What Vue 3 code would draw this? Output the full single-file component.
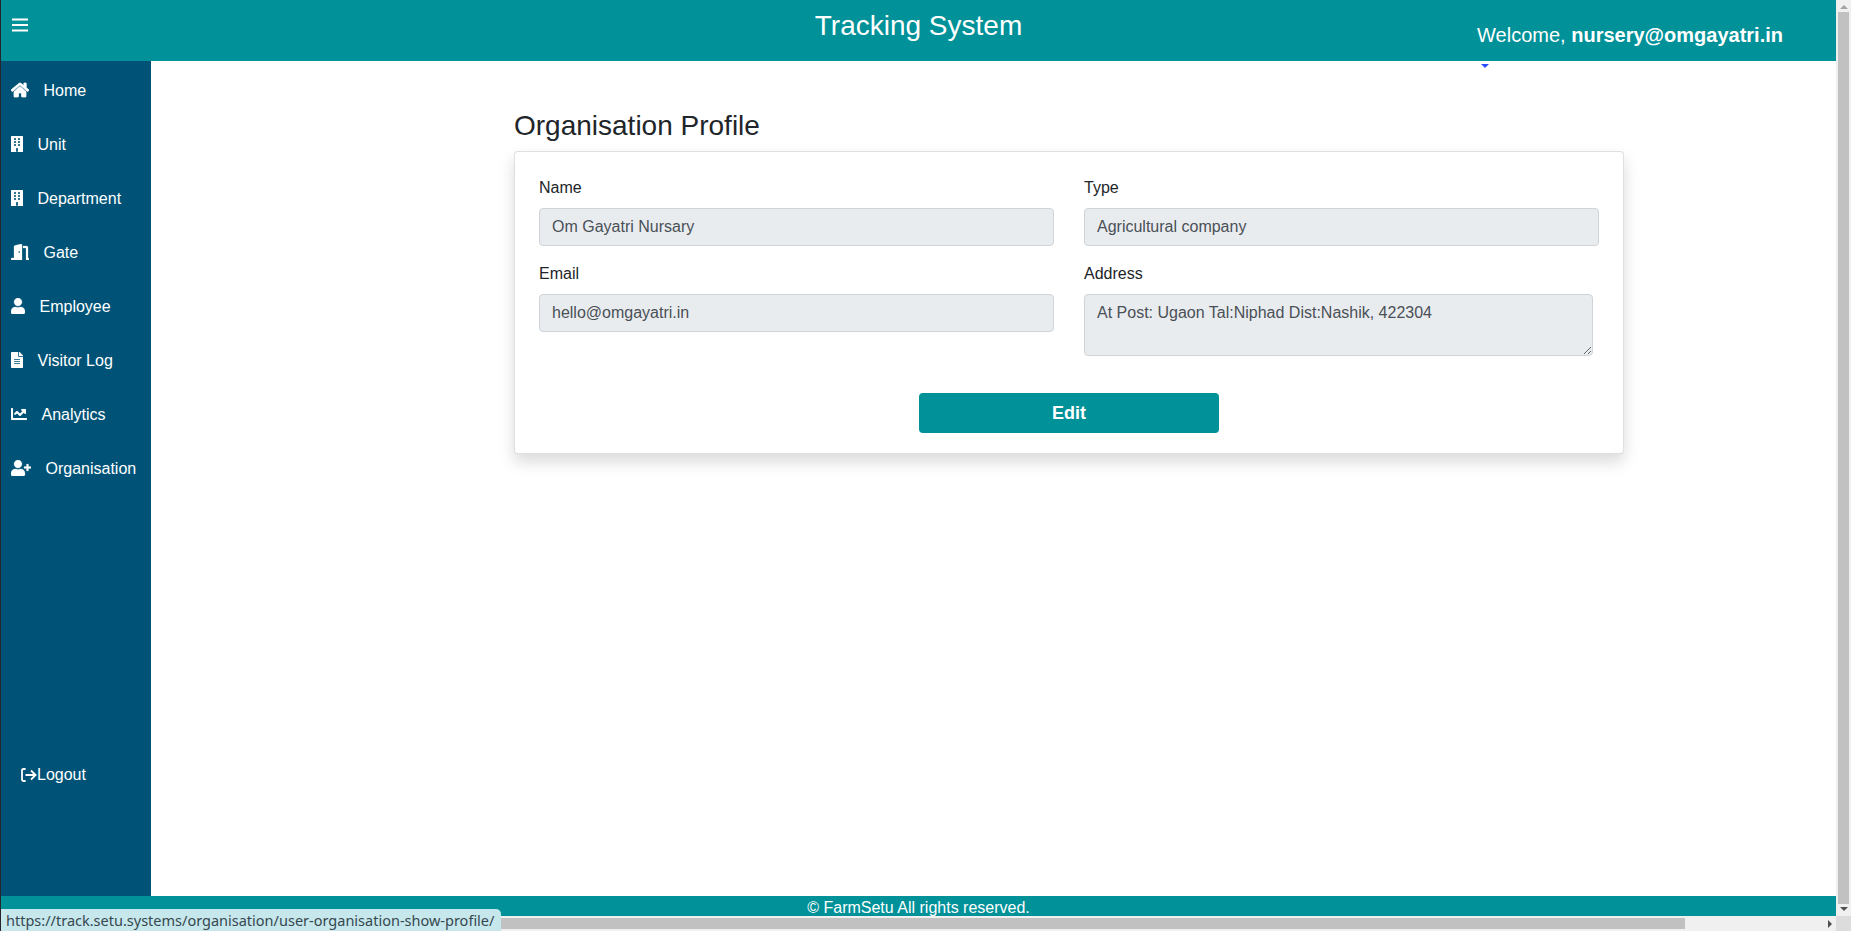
<template>
  <div class="window">
    <div class="edge"></div>

    <div class="page">
      <header class="topbar">
        <button class="burger" type="button" aria-label="Toggle sidebar">
          <svg width="16" height="14" viewBox="0 0 16 14"><path d="M0 1.5h16M0 7h16M0 12.5h16" stroke="#fff" stroke-width="2" /></svg>
        </button>
        <h1 class="brand">Tracking System</h1>
        <div class="welcome">Welcome, <b>nursery@omgayatri.in</b></div>
        <span class="caret"></span>
      </header>

      <div class="middle">
        <aside class="sidebar">
          <nav class="menu">
            <a v-for="item in menu" :key="item.label" class="menu-link" href="#">
              <svg class="menu-icon" :width="item.w * 16 / 512" height="16" :viewBox="`${item.x || 0} 0 ${item.w} 512`">
                <path :d="item.d" fill="#fff" stroke="#fff" :stroke-width="item.bold || 8" />
              </svg>
              <span>{{ item.label }}</span>
            </a>
          </nav>
          <a class="logout" href="#">
            <svg width="16" height="14" viewBox="0 0 16 14" fill="none" stroke="#fff" stroke-width="1.8">
              <path d="M4.6 1H2.4Q1 1 1 2.4v9.2Q1 13 2.4 13h2.2" />
              <path d="M4.5 7h10M10 2.5 14.6 7 10 11.5" />
            </svg>
            <span>Logout</span>
          </a>
        </aside>

        <main class="content">
          <h2 class="title">Organisation Profile</h2>
          <section class="card">
            <div class="fields">
              <div class="field">
                <label>Name</label>
                <input class="control" type="text" value="Om Gayatri Nursary" readonly />
              </div>
              <div class="field">
                <label>Type</label>
                <input class="control" type="text" value="Agricultural company" readonly />
              </div>
              <div class="field">
                <label>Email</label>
                <input class="control" type="text" value="hello@omgayatri.in" readonly />
              </div>
              <div class="field">
                <label>Address</label>
                <textarea class="control address" readonly>At Post: Ugaon Tal:Niphad Dist:Nashik, 422304</textarea>
              </div>
            </div>
            <div class="actions">
              <button class="edit" type="button">Edit</button>
            </div>
          </section>
        </main>
      </div>

      <footer class="footer">© FarmSetu All rights reserved.</footer>
    </div>

    <!-- browser scrollbars -->
    <div class="vbar">
      <span class="arrow up"></span>
      <div class="vthumb"></div>
      <span class="arrow down"></span>
    </div>
    <div class="hbar">
      <div class="hthumb"></div>
      <span class="arrow right"></span>
    </div>
    <div class="corner"></div>

    <div class="status">https://track.setu.systems/organisation/user-organisation-show-profile/</div>
  </div>
</template>

<script setup>
// no ledge at the foot, the door notch runs to the bottom edge
const building = 'M416 512V24c0-13.255-10.745-24-24-24H56C42.745 0 32 10.745 32 24v488zM128 76c0-6.627 5.373-12 12-12h40c6.627 0 12 5.373 12 12v40c0 6.627-5.373 12-12 12h-40c-6.627 0-12-5.373-12-12V76zm0 96c0-6.627 5.373-12 12-12h40c6.627 0 12 5.373 12 12v40c0 6.627-5.373 12-12 12h-40c-6.627 0-12-5.373-12-12v-40zm52 148h-40c-6.627 0-12-5.373-12-12v-40c0-6.627 5.373-12 12-12h40c6.627 0 12 5.373 12 12v40c0 6.627-5.373 12-12 12zm76 192h-64v-116c0-6.627 5.373-12 12-12h40c6.627 0 12 5.373 12 12v116zm64-204c0 6.627-5.373 12-12 12h-40c-6.627 0-12-5.373-12-12v-40c0-6.627 5.373-12 12-12h40c6.627 0 12 5.373 12 12v40zm0-96c0 6.627-5.373 12-12 12h-40c-6.627 0-12-5.373-12-12v-40c0-6.627 5.373-12 12-12h40c6.627 0 12 5.373 12 12v40zm0-96c0 6.627-5.373 12-12 12h-40c-6.627 0-12-5.373-12-12V76c0-6.627 5.373-12 12-12h40c6.627 0 12 5.373 12 12v40z'

const menu = [
  { label: 'Home', w: 576, bold: 24, d: 'M280.37 148.26L96 300.11V464a16 16 0 0 0 16 16l112.06-.29a16 16 0 0 0 15.92-16V368a16 16 0 0 1 16-16h64a16 16 0 0 1 16 16v95.64a16 16 0 0 0 16 16.05L464 480a16 16 0 0 0 16-16V300L295.67 148.26a12.19 12.19 0 0 0-15.3 0zM571.6 251.47L488 182.56V44.05a12 12 0 0 0-12-12h-56a12 12 0 0 0-12 12v72.61L318.47 43a48 48 0 0 0-61 0L4.34 251.47a12 12 0 0 0-1.6 16.9l25.5 31A12 12 0 0 0 45.15 301l235.22-193.74a12.19 12.19 0 0 1 15.3 0L530.9 301a12 12 0 0 0 16.9-1.6l25.5-31a12 12 0 0 0-1.7-16.93z' },
  { label: 'Unit', w: 384, x: 32, d: building },
  { label: 'Department', w: 384, x: 32, d: building },
  { label: 'Gate', w: 576, d: 'M560 448h-16V113.45C544 86.19 522.47 64 496 64H384v64h96v384h80c8.84 0 16-7.16 16-16v-32c0-8.84-7.16-16-16-16zM312.24 1.01l-192 49.74C105.99 54.44 96 67.7 96 82.92V448H16c-8.84 0-16 7.16-16 16v32c0 8.84 7.16 16 16 16h336V33.18c0-21.58-19.56-37.41-39.76-32.17zM264 288c-13.25 0-24-14.33-24-32 0-17.67 10.75-32 24-32s24 14.33 24 32c0 17.67-10.75 32-24 32z' },
  { label: 'Employee', w: 448, d: 'M224 256c70.7 0 128-57.3 128-128S294.7 0 224 0 96 57.3 96 128s57.3 128 128 128zm89.6 32h-16.7c-22.2 10.2-46.9 16-72.9 16s-50.6-5.8-72.9-16h-16.7C60.2 288 0 348.2 0 422.4V464c0 26.5 21.5 48 48 48h352c26.5 0 48-21.5 48-48v-41.6c0-74.2-60.2-134.4-134.4-134.4z' },
  { label: 'Visitor Log', w: 384, d: 'M224 136V0H24C10.7 0 0 10.7 0 24v464c0 13.3 10.7 24 24 24h336c13.3 0 24-10.7 24-24V160H248c-13.2 0-24-10.8-24-24zm64 236c0 6.6-5.4 12-12 12H108c-6.6 0-12-5.4-12-12v-8c0-6.6 5.4-12 12-12h168c6.6 0 12 5.4 12 12v8zm0-64c0 6.6-5.4 12-12 12H108c-6.6 0-12-5.4-12-12v-8c0-6.6 5.4-12 12-12h168c6.6 0 12 5.4 12 12v8zm0-72v8c0 6.6-5.4 12-12 12H108c-6.6 0-12-5.4-12-12v-8c0-6.6 5.4-12 12-12h168c6.6 0 12 5.4 12 12zm96-114.1v6.1H256V0h6.1c6.4 0 12.5 2.5 17 7l97.9 98c4.5 4.5 7 10.6 7 16.9z' },
  { label: 'Analytics', w: 512, bold: 2, d: 'M496 384H64V80c0-8.84-7.16-16-16-16H16C7.16 64 0 71.16 0 80v336c0 17.67 14.33 32 32 32h464c8.84 0 16-7.16 16-16v-32c0-8.84-7.16-16-16-16zM464 96H345.94c-21.38 0-32.09 25.85-16.97 40.97l32.4 32.4L288 242.75l-73.37-73.37c-12.5-12.5-32.76-12.5-45.25 0l-68.69 68.69c-6.25 6.25-6.25 16.38 0 22.63l22.62 22.62c6.25 6.25 16.38 6.25 22.63 0L192 237.25l73.37 73.37c12.5 12.5 32.76 12.5 45.25 0l96-96 32.4 32.4c15.12 15.12 40.97 4.41 40.97-16.97V112c.01-8.84-7.15-16-15.99-16z' },
  { label: 'Organisation', w: 640, d: 'M624 208h-64v-64c0-8.8-7.2-16-16-16h-32c-8.8 0-16 7.2-16 16v64h-64c-8.8 0-16 7.2-16 16v32c0 8.8 7.2 16 16 16h64v64c0 8.8 7.2 16 16 16h32c8.8 0 16-7.2 16-16v-64h64c8.8 0 16-7.2 16-16v-32c0-8.8-7.2-16-16-16zm-400 48c70.7 0 128-57.3 128-128S294.7 0 224 0 96 57.3 96 128s57.3 128 128 128zm89.6 32h-16.7c-22.2 10.2-46.9 16-72.9 16s-50.6-5.8-72.9-16h-16.7C60.2 288 0 348.2 0 422.4V464c0 26.5 21.5 48 48 48h352c26.5 0 48-21.5 48-48v-41.6c0-74.2-60.2-134.4-134.4-134.4z' }
]
</script>

<style>
html, body {
  margin: 0;
  overflow: hidden;
}
</style>

<style scoped>
.window {
  position: relative;
  display: grid;
  grid-template-columns: 1px 1fr 15px;
  grid-template-rows: 1fr 15px;
  width: 100vw;
  height: 100vh;
  overflow: hidden;
  background: #fff;
  font-family: "Liberation Sans", Arial, sans-serif;
  font-size: 16px;
  line-height: 24px;
  color: #212529;
}

.edge {
  grid-row: 1 / 3;
  background: #25252d;
}

.page {
  display: flex;
  flex-direction: column;
  min-width: 0;
  min-height: 0;
}

/* top bar */
.topbar {
  position: relative;
  flex: none;
  display: grid;
  grid-template-columns: 1fr auto 1fr;
  height: 61px;
  background: #009199;
  color: #fff;
}

.burger {
  justify-self: start;
  align-self: start;
  margin: 18px 0 0 11px;
  padding: 0;
  border: 0;
  background: none;
  line-height: 0;
}

.brand {
  margin: 9px 0 0;
  font-size: 28px;
  font-weight: 400;
  line-height: 34px;
}

.welcome {
  justify-self: end;
  margin: 23px 53px 0 0;
  font-size: 20px;
  white-space: nowrap;
}

.caret {
  position: absolute;
  top: 64px;
  left: 1480px;
  border-top: 4px solid #2b4cff;
  border-left: 4px solid transparent;
  border-right: 4px solid transparent;
}

/* sidebar */
.middle {
  flex: 1;
  display: flex;
  min-height: 0;
}

.sidebar {
  flex: none;
  display: flex;
  flex-direction: column;
  width: 150px;
  padding-top: 3px;
  box-sizing: border-box;
  background: #005377;
}

.menu {
  display: flex;
  flex-direction: column;
}

.menu-link {
  display: flex;
  align-items: center;
  gap: 14.5px;
  height: 54px;
  padding-left: 10px;
  color: #fff;
  text-decoration: none;
}

.menu-icon {
  flex: none;
  margin-top: -2px;
}

.logout {
  display: flex;
  align-items: center;
  margin: auto 0 109px 20px;
  color: #fff;
  text-decoration: none;
}

/* profile */
.content {
  flex: 1;
  min-width: 0;
  padding: 48px 0 0 363px;
  box-sizing: border-box;
}

.title {
  margin: 0 0 8px;
  font-size: 28px;
  font-weight: 400;
  line-height: 34px;
}

.card {
  width: 1110px;
  box-sizing: border-box;
  padding: 24px 24px 20px;
  border: 1px solid rgba(0, 0, 0, 0.125);
  border-radius: 4px;
  background: #fff;
  box-shadow: 0 8px 16px rgba(0, 0, 0, 0.15);
}

.fields {
  display: grid;
  grid-template-columns: 1fr 1fr;
  column-gap: 30px;
  row-gap: 16px;
}

.field label {
  display: block;
  margin-bottom: 8px;
}

.control {
  display: block;
  width: 100%;
  height: 38px;
  padding: 6px 12px;
  box-sizing: border-box;
  border: 1px solid #ced4da;
  border-radius: 4px;
  outline: none;
  background: #e9ecef;
  color: #495057;
  font: inherit;
}

.address {
  width: 509px;
  height: 62px;
  resize: vertical;
}

.actions {
  display: flex;
  justify-content: center;
  margin-top: 37px;
}

.edit {
  width: 300px;
  height: 40px;
  border: 0;
  border-radius: 4px;
  background: #009199;
  color: #fff;
  font: inherit;
  font-size: 18px;
  font-weight: 700;
}

/* footer and browser chrome */
.footer {
  flex: none;
  height: 20px;
  overflow: hidden;
  background: #009199;
  color: #fff;
  text-align: center;
  line-height: 24px;
}

.vbar {
  grid-column: 3;
  grid-row: 1;
  display: flex;
  flex-direction: column;
  align-items: center;
  background: #f0f0f0;
}

.vthumb {
  flex: 1;
  width: 11px;
  margin: 3px 0;
  background: #c1c1c1;
}

.hbar {
  grid-column: 2;
  grid-row: 2;
  display: flex;
  align-items: center;
  background: #f0f0f0;
}

.hthumb {
  width: 1668px;
  height: 11px;
  margin-left: 16px;
  background: #c1c1c1;
}

.corner {
  grid-column: 3;
  grid-row: 2;
  background: #dcdcdc;
}

.arrow {
  flex: none;
  width: 0;
  height: 0;
}

.up {
  margin-top: 5px;
  border-bottom: 4px solid #a3a3a3;
  border-left: 4px solid transparent;
  border-right: 4px solid transparent;
}

.down {
  margin-bottom: 5px;
  border-top: 4px solid #505050;
  border-left: 4px solid transparent;
  border-right: 4px solid transparent;
}

.right {
  margin-left: auto;
  margin-right: 4px;
  border-left: 4px solid #505050;
  border-top: 4px solid transparent;
  border-bottom: 4px solid transparent;
}

.status {
  position: absolute;
  left: 1px;
  bottom: 0;
  height: 22px;
  padding: 0 7px 0 5px;
  border-top-right-radius: 5px;
  background: #c6e8ec;
  color: #37474f;
  font-family: "Noto Sans", sans-serif;
  font-size: 14.5px;
  line-height: 22px;
  white-space: nowrap;
}
</style>
